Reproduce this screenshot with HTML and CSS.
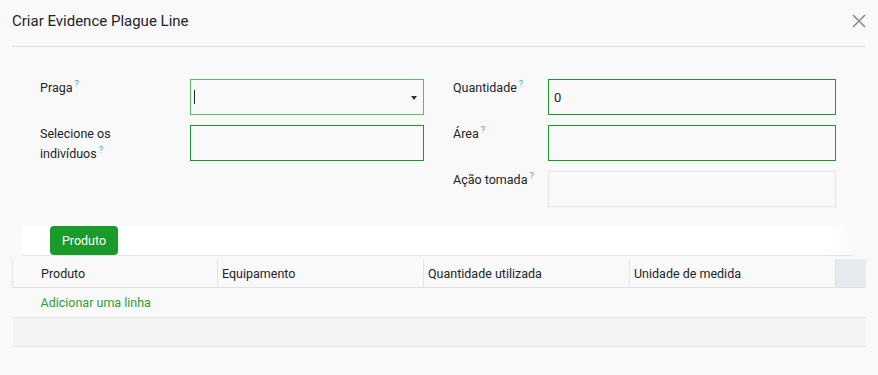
FILE: index.html
```html
<!DOCTYPE html>
<html>
    <head>
        <meta charset="UTF-8" />
        <title>Criar Evidence Plague Line</title>
        <link rel="stylesheet" href="styles.css">
    </head>
    <body>
        <div class="modal">
            <div class="modalHeader">
                <h4 class="modalTitle">Criar Evidence Plague Line</h4>
                <button type="button" class="closeBtn" aria-label="Fechar">
                    <svg width="14" height="14" viewBox="0 0 14 14">
                        <path d="M1 1L13 13M13 1L1 13" stroke="#888" stroke-width="1.5" fill="none" />
                    </svg>
                </button>
            </div>

            <div class="formGrid">
                <label class="fieldLabel left">Praga<sup class="help">?</sup></label>
                <div class="field select focused"><span class="caretText"></span><span class="arrow"></span></div>
                <div></div>
                <label class="fieldLabel">Quantidade<sup class="help">?</sup></label>
                <div class="field">0</div>

                <label class="fieldLabel left">Selecione os indivíduos<sup class="help">?</sup></label>
                <div class="field"></div>
                <div></div>
                <label class="fieldLabel">Área<sup class="help">?</sup></label>
                <div class="field"></div>

                <div></div>
                <div></div>
                <div></div>
                <label class="fieldLabel">Ação tomada<sup class="help">?</sup></label>
                <div class="field readonly"></div>
            </div>

            <div class="tabBar">
                <button type="button" class="tabBtn">Produto</button>
            </div>

            <table class="lines">
                <colgroup>
                    <col style="width: 205px">
                    <col style="width: 206px">
                    <col style="width: 206px">
                    <col style="width: 206px">
                    <col style="width: 30px">
                </colgroup>
                <thead>
                    <tr>
                        <th class="first">Produto</th>
                        <th>Equipamento</th>
                        <th>Quantidade utilizada</th>
                        <th>Unidade de medida</th>
                        <th class="opt"></th>
                    </tr>
                </thead>
                <tbody>
                    <tr class="addRow">
                        <td colspan="5"><a href="#">Adicionar uma linha</a></td>
                    </tr>
                    <tr class="emptyRow">
                        <td colspan="5"></td>
                    </tr>
                </tbody>
            </table>
        </div>
    </body>
</html>
```

FILE: styles.css
```css
body {
    margin: 0;
    background-color: #f9f9f9;
    font-family: Roboto, "Liberation Sans", sans-serif;
    font-size: 12.5px;
    color: #212529;
}
.modal {
    padding: 0 13px 0 12px;
}
.modalHeader {
    display: flex;
    justify-content: space-between;
    align-items: center;
    height: 46px;
    border-bottom: 1px solid #dcdee4;
}
.modalTitle {
    margin: 0 0 5px 0;
    font-size: 15px;
    font-weight: 400;
    color: #1f2327;
}
.closeBtn {
    border: none;
    background: none;
    padding: 0;
    margin: 0 -1px 4px 0;
    display: flex;
}

.formGrid {
    display: grid;
    grid-template-columns: 150px 234px 29px 95px 288px;
    grid-auto-rows: 36px;
    row-gap: 10px;
    margin: 32px 0 0 28px;
}
.fieldLabel {
    line-height: 20px;
    margin-top: -1px;
    white-space: nowrap;
}
.fieldLabel.left {
    white-space: normal;
    padding-right: 40px;
}
.help {
    color: #3fa5d8;
    font-size: 9px;
    margin-left: 2px;
    vertical-align: 5px;
    line-height: 1;
}
.field {
    border: 1px solid #1b9a29;
    display: flex;
    align-items: center;
    padding: 0 5px;
    font-size: 13px;
    position: relative;
}
.field.focused {
    border-color: #5cbb62;
}
.field.readonly {
    border-color: #e1e3ea;
    background-color: #fafafc;
}
.caretText {
    width: 1px;
    height: 14px;
    background-color: #222;
    margin-left: -2px;
}
.arrow {
    position: absolute;
    right: 6px;
    top: 16px;
    border-left: 3px solid transparent;
    border-right: 3px solid transparent;
    border-top: 4px solid #333;
}

.tabBar {
    margin: 19px 12px 0 10px;
    height: 29px;
    background: linear-gradient(to right, #fff 97%, #f9f9f9);
    border-bottom: 1px solid #e2e4e8;
    padding-left: 28px;
}
.tabBtn {
    height: 29px;
    width: 68px;
    border: none;
    border-radius: 4px;
    background-color: #1a9b29;
    color: #fff;
    font-family: inherit;
    font-size: 12.5px;
    padding: 0;
}

.lines {
    margin-top: 3px;
    width: 853px;
    border-collapse: collapse;
    table-layout: fixed;
}
.lines th {
    height: 28px;
    text-align: left;
    font-weight: 400;
    padding: 0 4px;
    border-left: 1px solid #e3e5e9;
    border-bottom: 1px solid #dfe1e6;
    white-space: nowrap;
}
.lines th.first {
    padding-left: 28px;
}
.lines th.opt {
    background-color: #e8ebee;
    border-left-color: #dcdfe3;
}
.addRow td {
    height: 29px;
    padding: 0 0 0 28px;
    border-bottom: 1px solid #e3e4e7;
}
.addRow a {
    color: #2ba038;
    text-decoration: none;
}
.emptyRow td {
    height: 28px;
    padding: 0;
    background-color: #f3f3f3;
    border-bottom: 1px solid #e3e4e7;
}
```
